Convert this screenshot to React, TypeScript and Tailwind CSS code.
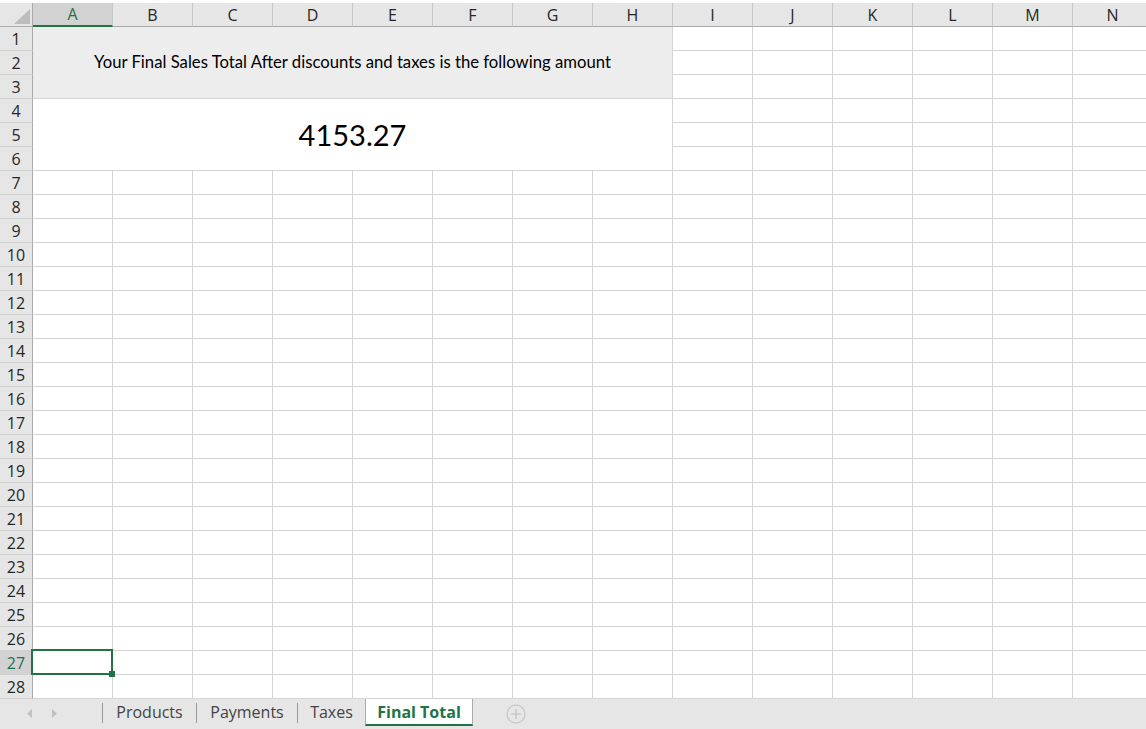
import { Fragment } from "react"

const COLS = ["A", "B", "C", "D", "E", "F", "G", "H", "I", "J", "K", "L", "M", "N"]
const ROWS = Array.from({ length: 28 }, (_, i) => i + 1)
const RIGHT_COLS = COLS.slice(8)

function Cell({ active = false }: { active?: boolean }) {
  return (
    <div className="relative border-r border-b border-[#d4d4d4] bg-white">
      {active && (
        <div className="absolute z-10 -left-[2px] -top-[2px] -right-[1px] -bottom-[1px] border-2 border-[#217346]">
          <div className="absolute -right-[4px] -bottom-[4px] w-[6px] h-[6px] bg-[#217346]" />
        </div>
      )}
    </div>
  )
}

function RowHeader({ n }: { n: number }) {
  const active = n === 27
  return (
    <div
      className={
        "flex items-center justify-center border-r border-b border-r-[#ababab] border-b-[#d0d0d0] text-[16px] " +
        (active ? "bg-[#d2d2d2] text-[#217346]" : "bg-[#e6e6e6] text-[#262626]")
      }
    >
      {n}
    </div>
  )
}

export default function App() {
  return (
    <div className="w-[1146px] h-[729px] overflow-hidden bg-white flex flex-col font-['Open_Sans',sans-serif]">
      {/* column headers */}
      <div className="flex h-[27px] pt-[3px] shrink-0 bg-white">
        <div className="w-[33px] shrink-0 bg-[#e6e6e6] border-r border-b border-[#ababab] flex items-end justify-end pr-[2px] pb-[2px]">
          <svg width="16" height="15" viewBox="0 0 16 15">
            <polygon points="16,0 16,15 0,15" fill="#bdbdbd" />
          </svg>
        </div>
        {COLS.map((c) =>
          c === "A" ? (
            <div
              key={c}
              className="w-[80px] shrink-0 flex items-center justify-center bg-[#d2d2d2] border-r border-r-[#c6c6c6] border-b-2 border-b-[#217346] text-[16px] text-[#217346]"
            >
              {c}
            </div>
          ) : (
            <div
              key={c}
              className="w-[80px] shrink-0 flex items-center justify-center bg-[#e6e6e6] border-r border-r-[#c6c6c6] border-b border-b-[#ababab] text-[16px] text-[#262626]"
            >
              {c}
            </div>
          )
        )}
      </div>

      {/* sheet body */}
      <div className="grid grid-cols-[33px_repeat(14,80px)] grid-rows-[repeat(28,24px)] shrink-0">
        {ROWS.map((r) => (
          <Fragment key={r}>
            <RowHeader n={r} />
            {r === 1 && (
              <div className="col-span-8 row-span-3 flex items-center justify-center bg-[#ededed] border-r border-b border-[#d4d4d4] font-['Lato',sans-serif] text-[16.7px] text-black">
                Your Final Sales Total After discounts and taxes is the following amount
              </div>
            )}
            {r === 4 && (
              <div className="col-span-8 row-span-3 flex items-center justify-center bg-white border-r border-b border-[#d4d4d4] font-['Lato',sans-serif] text-[29px] text-black">
                4153.27
              </div>
            )}
            {r > 6 && COLS.slice(0, 8).map((c) => <Cell key={c} active={r === 27 && c === "A"} />)}
            {RIGHT_COLS.map((c) => (
              <Cell key={c} />
            ))}
          </Fragment>
        ))}
      </div>

      {/* sheet tabs */}
      <div className="flex-1 flex items-start bg-[#e6e6e6] text-[16px]">
        <div className="w-[102px] h-[29px] flex items-center gap-[20px] pl-[27px]">
          <svg width="5" height="9" viewBox="0 0 5 9">
            <polygon points="5,0 5,9 0,4.5" fill="#c2c2c2" />
          </svg>
          <svg width="5" height="9" viewBox="0 0 5 9">
            <polygon points="0,0 0,9 5,4.5" fill="#c2c2c2" />
          </svg>
        </div>
        <div className="w-px h-[20px] mt-[4px] bg-[#9a9a9a]" />
        <div className="w-[93px] h-[25px] flex items-center justify-center text-[#444]">Products</div>
        <div className="w-px h-[20px] mt-[4px] bg-[#9a9a9a]" />
        <div className="w-[100px] h-[25px] flex items-center justify-center text-[#444]">Payments</div>
        <div className="w-px h-[20px] mt-[4px] bg-[#9a9a9a]" />
        <div className="w-[67px] h-[25px] flex items-center justify-center text-[#444]">Taxes</div>
        <div className="w-[108px] h-[27px] flex items-center justify-center bg-white border-x border-[#ababab] border-b-2 border-b-[#217346] font-bold text-[#217346]">
          Final Total
        </div>
        <div className="ml-[33px] mt-[5px]">
          <svg width="20" height="20" viewBox="0 0 20 20">
            <circle cx="10" cy="10" r="9" fill="none" stroke="#c8c8c8" strokeWidth="1.3" />
            <path d="M10 5v10M5 10h10" stroke="#c8c8c8" strokeWidth="1.6" />
          </svg>
        </div>
      </div>
    </div>
  )
}
